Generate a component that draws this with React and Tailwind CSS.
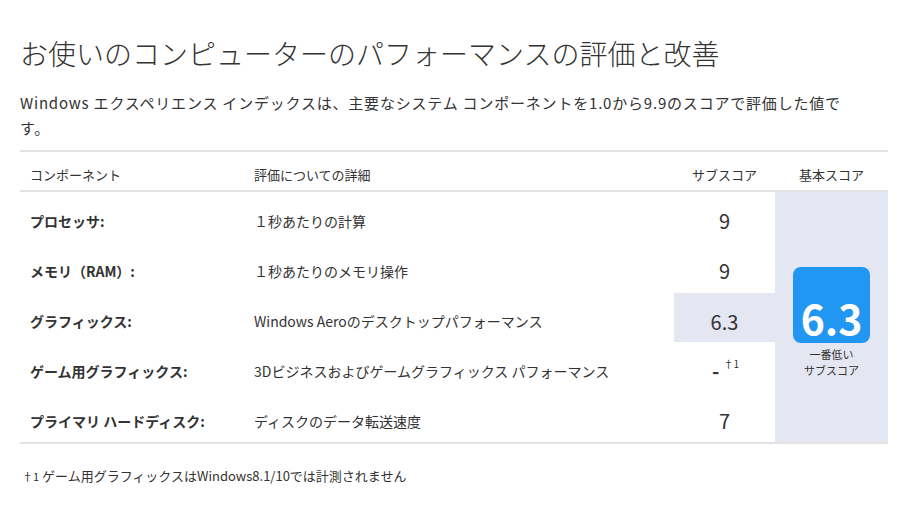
import React from "react";

const rows = [
  { name: "プロセッサ:", detail: "１秒あたりの計算", score: "9" },
  { name: "メモリ（RAM）:", detail: "１秒あたりのメモリ操作", score: "9" },
  { name: "グラフィックス:", detail: "Windows Aeroのデスクトップパフォーマンス", score: "6.3", low: true },
  { name: "ゲーム用グラフィックス:", detail: "3Dビジネスおよびゲームグラフィックス パフォーマンス", score: "-", note: true },
  { name: "プライマリ ハードディスク:", detail: "ディスクのデータ転送速度", score: "7" },
];

export default function App() {
  return (
    <div
      className="min-h-screen bg-white text-[#333] px-5 pt-[33px]"
      style={{ fontFamily: '"Noto Sans CJK JP", "Noto Sans", sans-serif' }}
    >
      <h1 className="text-[28px] leading-[40px] font-light">
        お使いのコンピューターのパフォーマンスの評価と改善
      </h1>
      <p className="mt-[17px] text-[15px] leading-[25px] tracking-[0.8px] w-[848px]">
        Windows エクスペリエンス インデックスは、主要なシステム コンポーネントを1.0から9.9のスコアで評価した値です。
      </p>

      <div className="mt-[10px] w-[868px] border-t-2 border-b-2 border-[#e3e3e3] grid grid-cols-[234px_420px_101px_113px] grid-rows-[40px_50px_50px_50px_50px_50px]">
        <div className="border-b-2 border-[#e3e3e3] flex items-center pt-[8px] pl-[10px] text-[13px]">コンポーネント</div>
        <div className="border-b-2 border-[#e3e3e3] flex items-center pt-[8px] text-[13px]">評価についての詳細</div>
        <div className="border-b-2 border-[#e3e3e3] flex items-center justify-center pt-[8px] text-[13px]">サブスコア</div>
        <div className="border-b-2 border-[#e3e3e3] flex items-center justify-center pt-[8px] text-[13px]">基本スコア</div>

        {rows.map((r, i) => (
          <React.Fragment key={i}>
            <div className="flex items-center pt-[8px] pl-[10px] text-[14px] font-bold" style={{ gridRow: i + 2, gridColumn: 1 }}>
              {r.name}
            </div>
            <div className="flex items-center pt-[8px] text-[14px]" style={{ gridRow: i + 2, gridColumn: 2 }}>
              {r.detail}
            </div>
            <div
              className={
                "flex items-center justify-center pt-[8px] text-[20px] " + (r.low ? "bg-[#e4e6f1] mt-px" : "")
              }
              style={{ gridRow: i + 2, gridColumn: 3 }}
            >
              {r.note ? (
                <span className="flex items-start pl-[2px]">
                  <span className="font-bold">-</span>
                  <span className="ml-[4px] mt-[2px] text-[10px] leading-[12px]">†1</span>
                </span>
              ) : (
                r.score
              )}
            </div>
          </React.Fragment>
        ))}

        <div className="col-start-4 row-start-2 row-span-5 bg-[#e4e6f1] flex flex-col items-center justify-center pt-[10px]">
          <div className="w-[77px] h-[76px] rounded-[8px] bg-[#2196f3] flex items-end justify-center pb-[2px]">
            <span className="text-white text-[41px] font-bold leading-[48px]">6.3</span>
          </div>
          <div className="mt-[3px] text-[11px] leading-[16px] text-center">
            <div>一番低い</div>
            <div>サブスコア</div>
          </div>
        </div>
      </div>

      <p className="mt-[22px] pl-[2px] text-[13px]">
        <span className="text-[11px]">†1</span> ゲーム用グラフィックスはWindows8.1/10では計測されません
      </p>
    </div>
  );
}
